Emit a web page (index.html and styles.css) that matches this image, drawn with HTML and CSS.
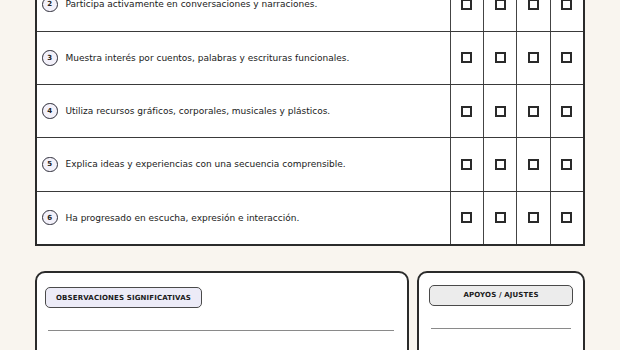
FILE: index.html
```html
<!DOCTYPE html>
<html lang="es">
<head>
<meta charset="utf-8">
<title>Registro</title>
<link rel="stylesheet" href="styles.css">
</head>
<body>
<main class="page">
  <section class="grid-table">
    <div class="row first">
      <div class="cell desc"><span class="num">2</span><span class="txt">Participa activamente en conversaciones y narraciones.</span></div>
      <div class="cell chk"><span class="box"></span></div>
      <div class="cell chk"><span class="box"></span></div>
      <div class="cell chk"><span class="box"></span></div>
      <div class="cell chk"><span class="box"></span></div>
    </div>
    <div class="row">
      <div class="cell desc"><span class="num">3</span><span class="txt">Muestra interés por cuentos, palabras y escrituras funcionales.</span></div>
      <div class="cell chk"><span class="box"></span></div>
      <div class="cell chk"><span class="box"></span></div>
      <div class="cell chk"><span class="box"></span></div>
      <div class="cell chk"><span class="box"></span></div>
    </div>
    <div class="row">
      <div class="cell desc"><span class="num">4</span><span class="txt">Utiliza recursos gráficos, corporales, musicales y plásticos.</span></div>
      <div class="cell chk"><span class="box"></span></div>
      <div class="cell chk"><span class="box"></span></div>
      <div class="cell chk"><span class="box"></span></div>
      <div class="cell chk"><span class="box"></span></div>
    </div>
    <div class="row">
      <div class="cell desc"><span class="num">5</span><span class="txt">Explica ideas y experiencias con una secuencia comprensible.</span></div>
      <div class="cell chk"><span class="box"></span></div>
      <div class="cell chk"><span class="box"></span></div>
      <div class="cell chk"><span class="box"></span></div>
      <div class="cell chk"><span class="box"></span></div>
    </div>
    <div class="row">
      <div class="cell desc"><span class="num">6</span><span class="txt">Ha progresado en escucha, expresión e interacción.</span></div>
      <div class="cell chk"><span class="box"></span></div>
      <div class="cell chk"><span class="box"></span></div>
      <div class="cell chk"><span class="box"></span></div>
      <div class="cell chk"><span class="box"></span></div>
    </div>
  </section>

  <section class="notes">
    <div class="card card-obs">
      <div class="badge badge-obs">OBSERVACIONES SIGNIFICATIVAS</div>
      <div class="line"></div>
      <div class="line"></div>
    </div>
    <div class="card card-apo">
      <div class="badge badge-apo">APOYOS / AJUSTES</div>
      <div class="line"></div>
      <div class="line"></div>
    </div>
  </section>
</main>
</body>
</html>
```

FILE: styles.css
```css
* { box-sizing: border-box; }
html, body {
  margin: 0;
  padding: 0;
  background: #f9f5ef;
  font-family: "DejaVu Sans", "Noto Sans", sans-serif;
  color: #222;
  overflow: hidden;
}
.page {
  padding: 0 35px;
  width: 620px;
}
.grid-table {
  margin-top: -24px;
  border: 2px solid #2b2b2b;
  background: #fff;
}
.row {
  display: grid;
  grid-template-columns: 1fr repeat(4, 33.3px);
  height: 53.25px;
  border-top: 1px solid #3a3a3a;
}
.row.first {
  border-top: none;
  height: 52.75px;
}
.cell {
  display: flex;
  align-items: center;
}
.desc {
  padding-left: 5px;
  gap: 8px;
}
.num {
  width: 15.5px;
  height: 15.5px;
  border: 1.5px solid #2e2e3a;
  border-radius: 50%;
  background: #f3f1fa;
  display: flex;
  align-items: center;
  justify-content: center;
  font-size: 7px;
  font-weight: bold;
  flex: none;
}
.txt {
  font-size: 9px;
  color: #1a1a1a;
}
.chk {
  border-left: 1px solid #444;
  justify-content: center;
}
.box {
  width: 11px;
  height: 11px;
  border: 2px solid #2a2a2a;
  background: #fff;
}
.notes {
  margin-top: 25px;
  display: grid;
  grid-template-columns: 374px 168px;
  gap: 8px;
}
.card {
  background: #fff;
  border: 2px solid #2b2b2b;
  border-radius: 10px;
  padding: 12px 10px 20px;
  height: 120px;
}
.card-obs {
  padding-left: 8px;
}
.badge {
  height: 21px;
  border: 1.5px solid #4a4a4a;
  border-radius: 5px;
  display: flex;
  align-items: center;
  font-size: 7px;
  font-weight: bold;
  letter-spacing: 0.15px;
  color: #1a1a1a;
}
.badge-obs {
  display: inline-flex;
  padding: 0 10px;
  background: #ecebf7;
}
.badge-apo {
  justify-content: center;
  background: #ececec;
}
.line {
  height: 1px;
  background: #8a8a8a;
  margin: 22px 3px 0 3px;
}
.card-apo .line {
  margin-left: 2px;
  margin-right: 2px;
}
.line + .line {
  margin-top: 26px;
}
```
